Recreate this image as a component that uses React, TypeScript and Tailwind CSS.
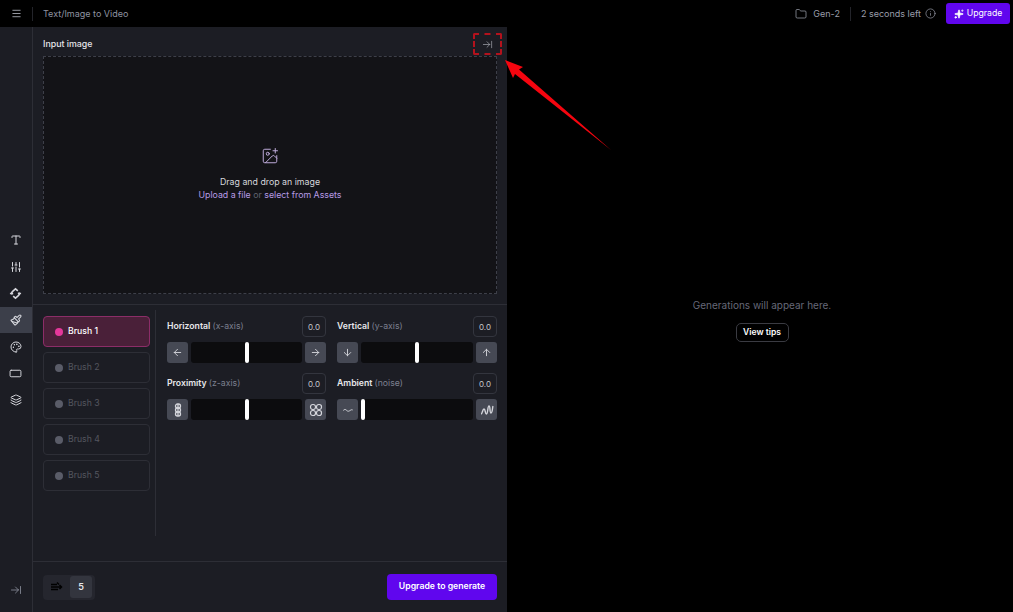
import {
  ArrowDown,
  ArrowLeft,
  ArrowRight,
  ArrowRightToLine,
  ArrowUp,
  Folder,
  ImagePlus,
  Info,
  Layers,
  Menu,
  Paintbrush,
  Palette,
  RectangleHorizontal,
  SlidersVertical,
  Sparkles,
  Type,
} from "lucide-react";
import type { ReactNode } from "react";

const font = { fontFamily: "Inter, 'Liberation Sans', sans-serif" };

const CameraIcon = () => (
  <svg width="13" height="13" viewBox="0 0 14 14" fill="none" stroke="currentColor" strokeWidth="1.7">
    <path d="M3 5.500 7 2l2.500 2.200" />
    <path d="M11 8.500 7 12 4.500 9.800" />
    <path d="M1 7h3.500M9.500 7H13" />
    <path d="M3 5.500V8M11 6v2.500" />
  </svg>
);

const StepsIcon = () => (
  <svg width="13" height="12" viewBox="0 0 13 12" fill="none" stroke="currentColor" strokeWidth="1.5">
    <path d="M1 3.500h6M1 6h10M1 8.500h7" />
    <path d="M7 1.500 9 3.500M9.500 4 11.500 6 9.500 8" />
  </svg>
);

const CloseIcon = () => (
  <svg width="14" height="14" viewBox="0 0 14 14" fill="none" stroke="currentColor" strokeWidth="1.3">
    <rect x="4.500" y="1" width="5" height="4" rx="2" />
    <rect x="4.500" y="5" width="5" height="4" rx="2" />
    <rect x="4.500" y="9" width="5" height="4" rx="2" />
    <path d="M7 1v12" />
  </svg>
);

const FarIcon = () => (
  <svg width="14" height="14" viewBox="0 0 14 14" fill="none" stroke="currentColor" strokeWidth="1.2">
    <rect x="1.500" y="1.500" width="5" height="5" rx="2.200" />
    <rect x="7.500" y="1.500" width="5" height="5" rx="2.200" />
    <rect x="1.500" y="7.500" width="5" height="5" rx="2.200" />
    <rect x="7.500" y="7.500" width="5" height="5" rx="2.200" />
  </svg>
);

const CalmIcon = () => (
  <svg width="12" height="12" viewBox="0 0 14 14" fill="none" stroke="currentColor" strokeWidth="1.1">
    <path d="M1.500 7.500c1.500-1.500 2.500-1.500 4 0s2.500 1 4 0 2-1 3-.5" />
  </svg>
);

const NoiseIcon = () => (
  <svg width="14" height="14" viewBox="0 0 14 14" fill="none" stroke="currentColor" strokeWidth="1.400">
    <path d="M1 11c1.500 0 1.500-5 3-5s1 5 2.500 5S7.500 3 9 3s.5 7 2 7 1.500-6 2-7" />
  </svg>
);

type SliderProps = {
  name: string;
  hint: string;
  left: ReactNode;
  right: ReactNode;
  thumb: string;
};

const Slider = ({ name, hint, left, right, thumb }: SliderProps) => (
  <div className="flex flex-col">
    <div className="flex items-center justify-between h-[21px]">
      <p className="text-[8.7px] font-semibold text-[#e6e6ea]">
        {name} <span className="font-normal text-[#7d8090]">{hint}</span>
      </p>
      <div className="w-[24px] h-[21px] rounded-[4px] border border-[#33353e] flex items-center justify-center text-[8px] text-[#c4c5cc]">
        0.0
      </div>
    </div>
    <div className="flex items-center gap-[3px] mt-[5px]">
      <button className="w-[21px] h-[21px] shrink-0 rounded-[3px] bg-[#464954] text-[#d5d6dc] flex items-center justify-center">
        {left}
      </button>
      <div className="flex-1 h-[21px] rounded-[3px] bg-[#0c0c0e] relative">
        <span className={`absolute top-0 w-[4px] h-[21px] rounded-full bg-white ${thumb}`} />
      </div>
      <button className="w-[21px] h-[21px] shrink-0 rounded-[3px] bg-[#464954] text-[#d5d6dc] flex items-center justify-center">
        {right}
      </button>
    </div>
  </div>
);

const App = () => {
  const tools = [
    { icon: <Type size={12} strokeWidth={2} /> },
    { icon: <SlidersVertical size={12} strokeWidth={2} /> },
    { icon: <CameraIcon /> },
    { icon: <Paintbrush size={12} strokeWidth={2.2} />, active: true },
    { icon: <Palette size={12} strokeWidth={2} /> },
    { icon: <RectangleHorizontal size={13} strokeWidth={1.8} /> },
    { icon: <Layers size={12} strokeWidth={2} /> },
  ];
  const brushes = ["Brush 1", "Brush 2", "Brush 3", "Brush 4", "Brush 5"];

  return (
    <div className="relative h-screen w-screen overflow-hidden bg-black flex flex-col" style={font}>
      <header className="h-[27px] shrink-0 bg-black flex items-center">
        <div className="w-[32px] h-full flex items-center justify-center text-[#a3a5ae]">
          <Menu size={11} strokeWidth={2} />
        </div>
        <div className="w-px h-[14px] bg-[#23242a]" />
        <span className="ml-[10px] pt-px text-[9px] text-[#8f93a1]">Text/Image to Video</span>
        <div className="ml-auto flex items-center text-[#9a9daa] text-[9px]">
          <Folder size={12} strokeWidth={1.5} />
          <span className="ml-[6px]">Gen-2</span>
          <div className="w-px h-[14px] bg-[#23242a] mx-[10px]" />
          <span>2 seconds left</span>
          <Info size={11} strokeWidth={1.5} className="ml-[4px]" />
        </div>
        <button className="ml-[10px] mr-[3px] w-[64px] h-[21px] rounded-[3px] bg-[#6006ee] text-white text-[8.7px] flex items-center justify-center gap-[3px]">
          <Sparkles size={10} fill="white" strokeWidth={1.5} />
          Upgrade
        </button>
      </header>

      <div className="flex-1 flex min-h-0">
        <aside className="w-[33px] shrink-0 bg-[#1c1d24] border-r border-[#2d2e36] flex flex-col text-[#d5d6dc]">
          <div className="mt-[200px] flex flex-col">
            {tools.map((tool, i) => (
              <div
                key={i}
                className={`h-[26.6px] pr-px flex items-center justify-center ${tool.active ? "bg-[#3c3f4a]" : ""}`}
              >
                {tool.icon}
              </div>
            ))}
          </div>
          <div className="mt-auto mb-[16px] pr-px flex justify-center text-[#8f93a1]">
            <ArrowRightToLine size={12} strokeWidth={1.6} />
          </div>
        </aside>

        <main className="w-[474px] shrink-0 bg-[#1c1d24] flex flex-col">
          <section className="h-[278px] shrink-0 px-[10px] border-b border-[#2d2e36] flex flex-col">
            <div className="h-[29px] shrink-0 pt-[5px] flex items-center justify-between">
              <span className="text-[8.8px] font-medium text-[#e6e6ea]">Input image</span>
              <span className="w-[29px] h-[22px] -mr-[5px] rounded-[2px] border-2 border-dashed border-[#b3121d] flex items-center justify-center text-[#a8a9b2]">
                <ArrowRightToLine size={11} strokeWidth={1.5} />
              </span>
            </div>
            <div className="h-[238px] shrink-0 border border-dashed border-[#3d3f49] bg-[#131317] flex flex-col items-center justify-center">
              <ImagePlus size={18} strokeWidth={1.3} className="text-[#c1aede] -mt-[2px]" />
              <p className="mt-[10px] text-[8.8px] text-[#d5d6dc] leading-[13px]">Drag and drop an image</p>
              <p className="text-[8.8px] leading-[13px] text-[#b79be6]">
                Upload a file <span className="text-[#5f6270]">or</span> select from Assets
              </p>
            </div>
          </section>

          <section className="flex-1 min-h-0 flex pl-[10px] pr-[10px] pt-[5px]">
            <div className="w-[107px] shrink-0 flex flex-col gap-[5px] pt-[6px]">
              {brushes.map((brush, i) => (
                <div
                  key={brush}
                  className={`h-[31px] rounded-[4px] border flex items-center pl-[11px] gap-[5px] text-[8.7px] ${
                    i === 0
                      ? "border-[#8c2d68] bg-[#4a2039] text-white font-medium"
                      : "border-[#2d2e36] text-[#54565f]"
                  }`}
                >
                  <span className={`w-[8px] h-[8px] rounded-full ${i === 0 ? "bg-[#e5389b]" : "bg-[#5a5c68]"}`} />
                  {brush}
                </div>
              ))}
            </div>
            <div className="w-px h-[226px] ml-[5px] bg-[#2d2e36]" />
            <div className="flex-1 ml-[11px] pt-[6px] grid grid-cols-[159px_1fr] gap-x-[11px] gap-y-[10px] content-start">
              <Slider name="Horizontal" hint="(x-axis)" thumb="left-[54px]" left={<ArrowLeft size={11} />} right={<ArrowRight size={11} />} />
              <Slider name="Vertical" hint="(y-axis)" thumb="left-[54px]" left={<ArrowDown size={11} />} right={<ArrowUp size={11} />} />
              <Slider name="Proximity" hint="(z-axis)" thumb="left-[54px]" left={<CloseIcon />} right={<FarIcon />} />
              <Slider name="Ambient" hint="(noise)" thumb="left-0" left={<CalmIcon />} right={<NoiseIcon />} />
            </div>
          </section>

          <footer className="h-[51px] shrink-0 border-t border-[#2d2e36] px-[10px] flex items-center justify-between">
            <div className="w-[52px] h-[25px] rounded-[4px] bg-[#25262e] flex items-center pl-[7px]">
              <StepsIcon />
              <span className="ml-[7px] w-[22px] h-[22px] rounded-[3px] bg-[#33353e] text-[#e6e6ea] text-[9px] font-semibold flex items-center justify-center">
                5
              </span>
            </div>
            <button className="w-[110px] h-[26px] rounded-[4px] bg-[#6006ee] text-white text-[8.7px] font-semibold">
              Upgrade to generate
            </button>
          </footer>
        </main>

        <section className="flex-1 bg-black flex flex-col items-center justify-center pl-[4px]">
          <p className="text-[10px] text-[#666878]">Generations will appear here.</p>
          <button className="mt-[10px] w-[53px] h-[19px] rounded-[5px] border border-[#3a3b42] text-white text-[8.5px] font-semibold">
            View tips
          </button>
        </section>
      </div>

      {/* red annotation arrow over the page */}
      <svg className="absolute inset-0 pointer-events-none" width="1013" height="612">
        <polygon points="505,60 523,67 519,69.500 611,150 515,74 513,78" fill="#f5050f" />
      </svg>
    </div>
  );
};

export default App;
